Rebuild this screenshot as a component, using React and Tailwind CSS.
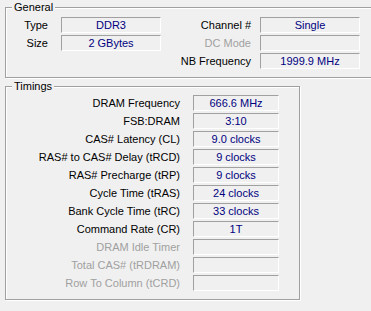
const general = [
  { left: ["Type", "DDR3"], right: ["Channel #", "Single"] },
  { left: ["Size", "2 GBytes"], right: ["DC Mode", null] },
  { left: null, right: ["NB Frequency", "1999.9 MHz"] },
];

const timings = [
  ["DRAM Frequency", "666.6 MHz"],
  ["FSB:DRAM", "3:10"],
  ["CAS# Latency (CL)", "9.0 clocks"],
  ["RAS# to CAS# Delay (tRCD)", "9 clocks"],
  ["RAS# Precharge (tRP)", "9 clocks"],
  ["Cycle Time (tRAS)", "24 clocks"],
  ["Bank Cycle Time (tRC)", "33 clocks"],
  ["Command Rate (CR)", "1T"],
  ["DRAM Idle Timer", null],
  ["Total CAS# (tRDRAM)", null],
  ["Row To Column (tCRD)", null],
];

const Field = ({ value, width }) => (
  <div
    className={`${width} h-[16px] border-t border-l border-b border-r border-t-[#a0a0a0] border-l-[#a0a0a0] border-b-white border-r-white bg-[#f0f0f0] flex items-center justify-center text-[#000080] leading-none`}
  >
    {value}
  </div>
);

const Group = ({ title, className, children }) => (
  <div
    className={`relative border border-[#a0a0a0] shadow-[inset_1px_1px_0_#ffffff,1px_1px_0_#ffffff] ${className}`}
  >
    <span className="absolute left-[6px] top-[-8px] bg-[#f0f0f0] px-[2px] leading-[14px] text-black">
      {title}
    </span>
    {children}
  </div>
);

const App = () => {
  return (
    <div
      className="w-[371px] h-[311px] bg-[#f0f0f0] overflow-hidden text-[11px] text-black pl-[5px] pt-[7px]"
      style={{ fontFamily: '"Liberation Sans", Arial, sans-serif' }}
    >
      <Group title="General" className="w-[400px] h-[71px]">
        <div className="flex flex-col gap-[2px] pt-[9px]">
          {general.map((row, i) => (
            <div key={i} className="flex h-[16px] items-center">
              <div className="w-[42px] text-right">{row.left && row.left[0]}</div>
              <div className="w-[13px]" />
              <div className="w-[100px]">
                {row.left && <Field value={row.left[1]} width="w-[100px]" />}
              </div>
              <div className="w-[90px] text-right">
                <span className={row.right[1] ? "text-black" : "text-[#a0a0a0]"}>
                  {row.right[0]}
                </span>
              </div>
              <div className="w-[9px]" />
              <Field value={row.right[1]} width="w-[100px]" />
            </div>
          ))}
        </div>
      </Group>

      <Group title="Timings" className="mt-[8px] w-[295px] h-[214px]">
        <div className="flex flex-col gap-[2px] pt-[8px]">
          {timings.map(([label, value]) => (
            <div key={label} className="flex h-[16px] items-center">
              <div
                className={`w-[174px] text-right ${value ? "text-black" : "text-[#a0a0a0]"}`}
              >
                {label}
              </div>
              <div className="w-[13px]" />
              <Field value={value} width="w-[86px]" />
            </div>
          ))}
        </div>
      </Group>
    </div>
  );
};

export default App;
